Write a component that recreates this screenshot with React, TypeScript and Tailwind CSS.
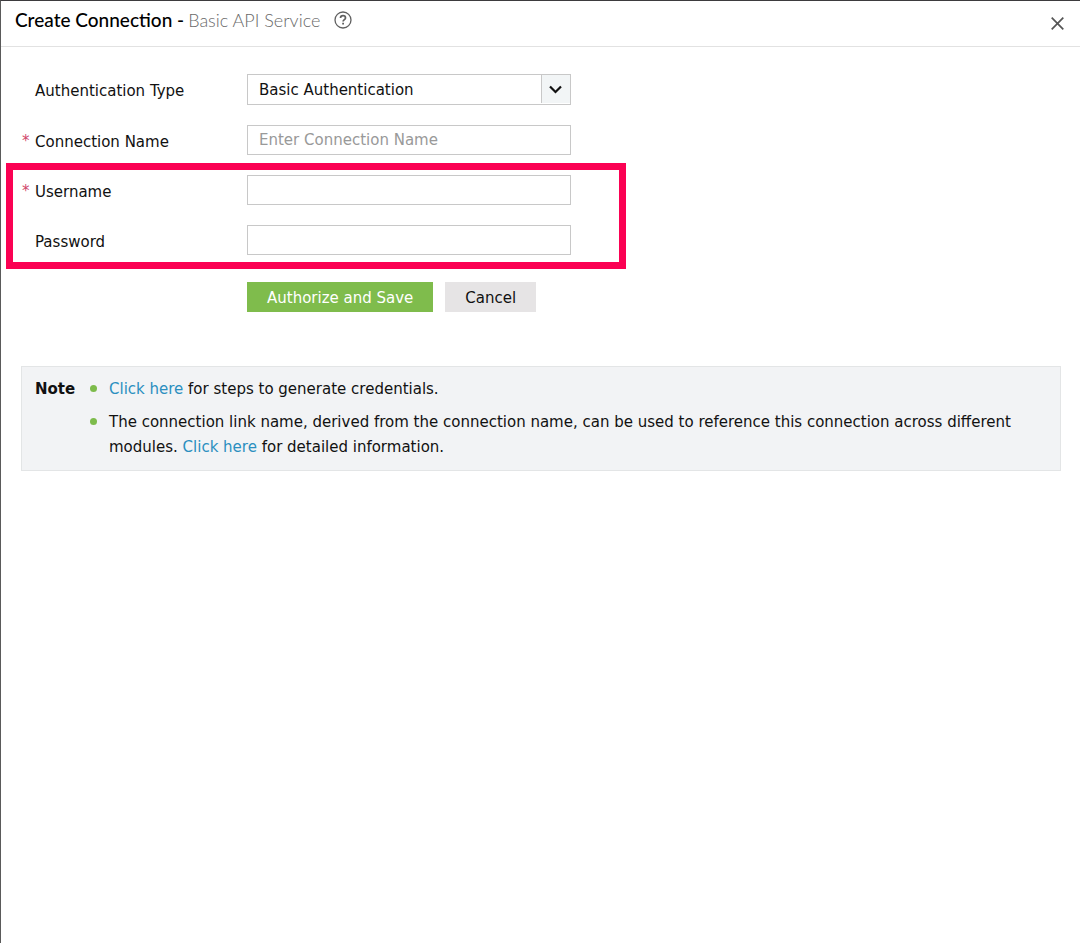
import { useState } from "react";
import type { InputHTMLAttributes, ReactNode } from "react";

type FieldRowProps = {
  id: string;
  label: string;
  required?: boolean;
  children: ReactNode;
};

const FieldRow = ({ id, label, required, children }: FieldRowProps) => {
  return (
    <div className="flex items-center">
      <span className="w-[13px] shrink-0 pt-0.5 text-[#d0476a]">
        {required ? "*" : ""}
      </span>
      <label htmlFor={id} className="w-[212px] shrink-0 pt-1">
        {label}
      </label>
      {children}
    </div>
  );
};

const TextInput = (props: InputHTMLAttributes<HTMLInputElement>) => {
  return (
    <input
      {...props}
      className="h-[30px] w-[324px] min-w-0 border border-[#c8c8c8] bg-white px-[11px] outline-none placeholder:text-[#999999] focus:border-[#8a8a8a]"
    />
  );
};

const NoteItem = ({ children }: { children: ReactNode }) => {
  return (
    <li className="flex">
      <span className="mt-2 mr-3 size-[7px] shrink-0 rounded-full bg-[#7dbb4b]" />
      <p>{children}</p>
    </li>
  );
};

const App = () => {
  const [authType, setAuthType] = useState("basic");

  return (
    <main className="min-h-screen border-t border-l border-t-[#3d3b3e] border-l-[#5a5a5a] bg-white font-['DejaVu_Sans',Verdana,sans-serif] text-[15px] leading-[25px] text-[#111111]">
      {/* Header */}
      <header className="flex h-[46px] items-center border-b border-[#e2e2e2] pr-4 pb-2 pl-[14px] font-['Lato',sans-serif] text-[19px]">
        <h1 className="flex items-baseline gap-1">
          <span className="font-medium text-black">Create Connection -</span>
          <span className="text-lg font-light text-[#6a6a6a]">
            Basic API Service
          </span>
        </h1>
        <button type="button" aria-label="Help" className="ml-[14px]">
          <svg
            className="size-[18px]"
            viewBox="0 0 18 18"
            fill="none"
            stroke="#606060"
          >
            <circle cx="9" cy="9" r="8" strokeWidth="1.3" />
            <path
              d="M6.5 7.1c0-1.6 1.1-2.4 2.5-2.4s2.5.8 2.5 2.2c0 1.7-2.4 1.7-2.4 3.6"
              strokeWidth="1.7"
            />
            <path d="M9.1 11.7v1.8" strokeWidth="1.8" />
          </svg>
        </button>
        <button type="button" aria-label="Close" className="mt-2 ml-auto">
          <svg
            className="size-[13px]"
            viewBox="0 0 13 13"
            fill="none"
            stroke="#555555"
            strokeWidth="1.7"
          >
            <path d="M.7.7l11.6 11.6M12.3.7L.7 12.3" />
          </svg>
        </button>
      </header>

      <form
        className="ml-[5px] max-w-[620px] pt-[27px]"
        onSubmit={(e) => e.preventDefault()}
      >
        <div className="flex flex-col gap-5 px-4">
          <FieldRow id="authType" label="Authentication Type">
            <div className="relative w-[324px]">
              <select
                id="authType"
                value={authType}
                onChange={(e) => setAuthType(e.target.value)}
                className="block h-[31px] w-full appearance-none border border-[#c8c8c8] bg-white pt-0.5 pr-9 pl-[11px] outline-none"
              >
                <option value="basic">Basic Authentication</option>
                <option value="oauth2">OAuth 2.0</option>
              </select>
              <span className="pointer-events-none absolute top-px right-px bottom-[2px] flex w-[29px] items-center justify-center border-l border-[#c8c8c8] bg-[#f2f5f6] pr-0.5">
                <svg
                  className="h-[9px] w-[13px]"
                  viewBox="0 0 13 9"
                  fill="none"
                  stroke="#111111"
                  strokeWidth="2.2"
                >
                  <path d="M1 1.5l5.5 5.5L12 1.5" />
                </svg>
              </span>
            </div>
          </FieldRow>
          <FieldRow id="connectionName" label="Connection Name" required>
            <TextInput
              id="connectionName"
              type="text"
              placeholder="Enter Connection Name"
            />
          </FieldRow>
        </div>

        {/* Credentials */}
        <div className="mt-2 flex flex-col gap-5 border-[7px] border-[#fb0153] px-[9px] pt-[5px] pb-[7px]">
          <FieldRow id="username" label="Username" required>
            <TextInput id="username" type="text" />
          </FieldRow>
          <FieldRow id="password" label="Password">
            <TextInput id="password" type="password" />
          </FieldRow>
        </div>

        <div className="mt-[13px] flex gap-3 pl-[241px]">
          <button
            type="submit"
            className="h-[30px] bg-[#7fbc4c] px-5 pt-0.5 text-white"
          >
            Authorize and Save
          </button>
          <button type="button" className="h-[30px] bg-[#e6e4e5] px-5 pt-0.5">
            Cancel
          </button>
        </div>
      </form>

      {/* Note */}
      <section className="mt-[54px] mr-[19px] ml-5 flex border border-[#e3e5e6] bg-[#f2f3f5] px-[13px] py-[10px]">
        <h2 className="w-[55px] shrink-0 font-bold">Note</h2>
        <ul className="flex flex-col gap-2">
          <NoteItem>
            <a href="#credentials" className="text-[#2b8fc0]">
              Click here
            </a>{" "}
            for steps to generate credentials.
          </NoteItem>
          <NoteItem>
            The connection link name, derived from the connection name, can be
            used to reference this connection across different modules.{" "}
            <a href="#link-name" className="text-[#2b8fc0]">
              Click here
            </a>{" "}
            for detailed information.
          </NoteItem>
        </ul>
      </section>
    </main>
  );
};

export default App;
